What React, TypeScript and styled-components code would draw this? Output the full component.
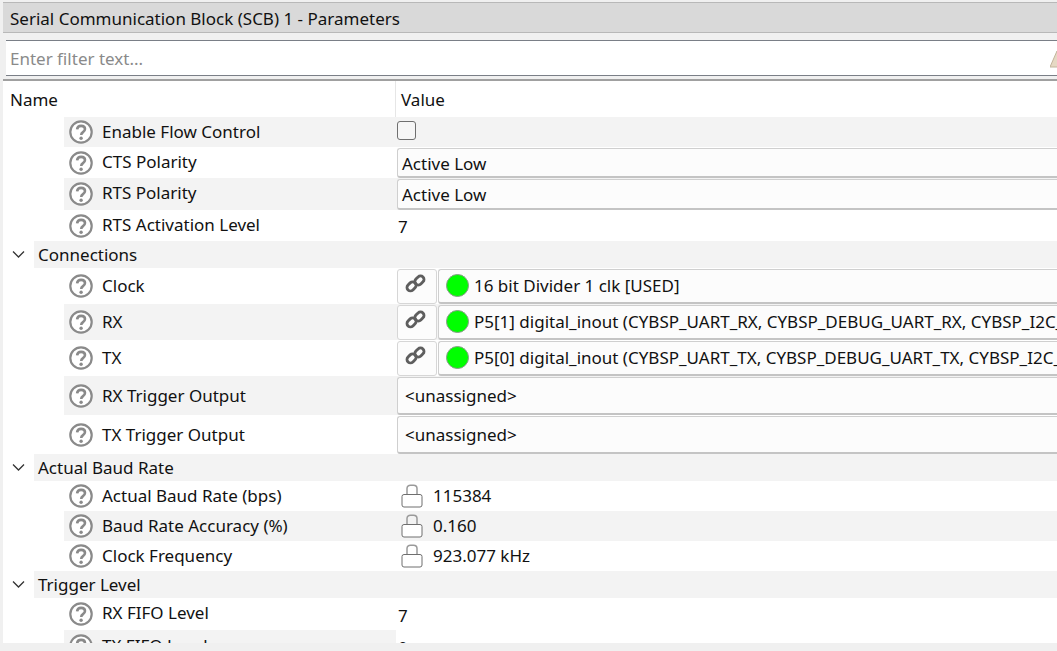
import React from "react";
import styled, { createGlobalStyle } from "styled-components";

const Global = createGlobalStyle`
  html, body { margin: 0; padding: 0; background: #f0f0f0; overflow: hidden; }
  * { box-sizing: border-box; }
`;

const Page = styled.div`
  width: 1057px; height: 651px; background: #f0f0f0; overflow: hidden;
  padding-top: 2px; padding-left: 3px;
  font-family: "Noto Sans", "Open Sans", sans-serif; font-size: 17px; color: #111;
`;
const TitleBar = styled.div`
  height: 31px; background: #d9d9d9; border-top: 1px solid #b8b8b8; border-bottom: 1px solid #b8b8b8;
  display: flex; align-items: center; padding: 2px 0 0 7px; white-space: nowrap;
`;
const FilterBar = styled.div`
  margin-top: 7px; margin-left: 3px; height: 36px; background: #fff;
  border-top: 1px solid #7a7f87; border-bottom: 1px solid #7a7f87;
  display: flex; align-items: center; justify-content: space-between; padding-left: 4px; color: #8a8a8a; overflow: hidden;
`;
const Tree = styled.div`
  margin-top: 3px; height: 564px; background: #fff; border-top: 2px solid #a0a0a0; overflow: hidden;
`;
const Header = styled.div`
  height: 36px; display: flex; align-items: center; white-space: nowrap;
`;
const HeaderName = styled.div`width: 392px; padding-left: 7px;`;
const HeaderValue = styled.div`
  flex: 1; height: 100%; border-left: 1px solid #e6e6e6; padding-left: 5px; display: flex; align-items: center;
`;
const Row = styled.div<{ $h: number }>`
  height: ${p => p.$h}px; display: flex; align-items: stretch; white-space: nowrap;
`;
const Name = styled.div<{ $alt: boolean }>`
  margin-left: 61px; width: 332px; display: flex; align-items: center; gap: 9px; padding-left: 5px;
  background: ${p => (p.$alt ? "#f3f3f3" : "#fff")};
`;
const NameText = styled.span<{ $lift: number }>`position: relative; top: ${p => -p.$lift}px;`;
const Value = styled.div<{ $alt: boolean }>`
  flex: 1; min-width: 0; display: flex; align-items: center; padding-left: 1px; overflow: hidden;
  background: ${p => (p.$alt ? "#f3f3f3" : "#fff")};
`;
const GroupRow = styled.div`
  height: 27px; display: flex; align-items: center; white-space: nowrap;
`;
const Chevron = styled.svg`width: 31px; height: 10px; flex: none; padding-left: 9px;`;
const GroupLabel = styled.div`
  flex: 1; height: 100%; background: #f3f3f3; display: flex; align-items: center; padding-left: 4px;
`;
const Field = styled.div<{ $pad?: number; $top?: number }>`
  flex: 1; height: calc(100% - 1px); background: #fcfcfc; border: 1px solid #cfcfcf; border-bottom: 2px solid #c4c4c4;
  border-right: none; border-radius: 3px 0 0 3px; display: flex; align-items: center;
  padding: ${p => p.$top ?? 0}px 0 0 ${p => p.$pad ?? 4}px; overflow: hidden;
`;
const LinkButton = styled.div`
  width: 40px; flex: none; height: calc(100% - 1px); background: #fcfcfc; border: 1px solid #d6d6d6; border-radius: 3px;
  display: flex; align-items: center; justify-content: center; margin-right: 1px;
`;
const Dot = styled.span`
  width: 23px; height: 23px; flex: none; border-radius: 50%; background: #00ff00; border: 1px solid #8a9a8a; margin: 0 5px 0 4px;
`;
const Check = styled.span`
  width: 19px; height: 19px; border: 1px solid #6f6f6f; border-radius: 3px; background: #f6f6f6; margin: 0 0 3px 0;
`;
const Plain = styled.span`padding: 2px 0 0 1px;`;
const Locked = styled.span`display: flex; align-items: center; gap: 11px; padding-left: 4px;`;
const LockedText = styled.span`position: relative; top: -1px; left: -1px;`;
const HelpSvg = styled.svg`flex: none;`;
const LockSvg = styled.svg`flex: none;`;
const LinkSvg = styled.svg`margin: 0 3px 6px 0;`;
const Warn = styled.svg`width: 20px; height: 20px; flex: none; margin-right: -13px; margin-top: 2px;`;

const Help = () => (
  <HelpSvg width="24" height="24" viewBox="0 0 24 24">
    <circle cx="12" cy="12" r="10.7" fill="#fff" stroke="#8a8a8a" strokeWidth="2.2" />
    <path d="M8.1 9.4c.2-2.2 1.8-3.5 4-3.5 2.3 0 3.9 1.3 3.9 3.2 0 1.4-.8 2.2-2 3-1.1.8-1.8 1.4-1.8 2.8" fill="none" stroke="#8a8a8a" strokeWidth="2.6" />
    <circle cx="12.1" cy="18.3" r="1.7" fill="#8a8a8a" />
  </HelpSvg>
);
const Lock = () => (
  <LockSvg width="22" height="24" viewBox="0 0 22 24">
    <path d="M6 11V4.5C6 2.5 7.5 1.2 9.5 1.2h3C14.5 1.2 16 2.5 16 4.5V11" fill="none" stroke="#9a9a9a" strokeWidth="1.5" />
    <rect x="1" y="10.5" width="20" height="12.5" rx="2" fill="#fff" stroke="#6f6f6f" />
  </LockSvg>
);
const LinkIcon = () => (
  <LinkSvg width="21" height="21" viewBox="0 0 20 20">
    <g fill="none" stroke="#5e5e5e" strokeWidth="2.7">
      <rect x="1.5" y="9.5" width="9.5" height="6.6" rx="3.3" transform="rotate(-45 6.2 12.8)" />
      <rect x="9" y="3.8" width="9.5" height="6.6" rx="3.3" transform="rotate(-45 13.8 7.1)" />
    </g>
  </LinkSvg>
);
const Chev = () => (
  <Chevron viewBox="0 0 22 10">
    <path d="M1 1.5 6.5 7 12 1.5" fill="none" stroke="#333" strokeWidth="1.3" />
  </Chevron>
);

type Item = { name: string; h: number; alt: boolean; valueAlt?: boolean; lift?: number; value: React.ReactNode };
const Param = ({ name, h, alt, valueAlt, lift = 1, value }: Item) => (
  <Row $h={h}>
    <Name $alt={alt}><Help /><NameText $lift={lift}>{name}</NameText></Name>
    <Value $alt={valueAlt ?? alt}>{value}</Value>
  </Row>
);
const Link = ({ text }: { text: string }) => (
  <>
    <LinkButton><LinkIcon /></LinkButton>
    <Field $pad={3}><Dot />{text}</Field>
  </>
);
const Lk = ({ text }: { text: string }) => (
  <Locked><Lock /><LockedText>{text}</LockedText></Locked>
);

export default function App() {
  return (
    <Page>
      <Global />
      <TitleBar>Serial Communication Block (SCB) 1 - Parameters</TitleBar>
      <FilterBar>
        Enter filter text...
        <Warn viewBox="0 0 20 20"><path d="M0 18 7 2l7 16z" fill="#e6d9c4" stroke="#c2b49c" /></Warn>
      </FilterBar>
      <Tree>
        <Header><HeaderName>Name</HeaderName><HeaderValue>Value</HeaderValue></Header>
        <Param name="Enable Flow Control" h={30} alt value={<Check />} />
        <Param name="CTS Polarity" h={31} alt={false} value={<Field $top={2}>Active Low</Field>} />
        <Param name="RTS Polarity" h={32} alt lift={2} value={<Field $top={2}>Active Low</Field>} />
        <Param name="RTS Activation Level" h={31} alt={false} value={<Plain>7</Plain>} />
        <GroupRow><Chev /><GroupLabel>Connections</GroupLabel></GroupRow>
        <Param name="Clock" h={36} alt={false} value={<Link text="16 bit Divider 1 clk [USED]" />} />
        <Param name="RX" h={36} alt value={<Link text="P5[1] digital_inout (CYBSP_UART_RX, CYBSP_DEBUG_UART_RX, CYBSP_I2C_SDA)" />} />
        <Param name="TX" h={36} alt={false} value={<Link text="P5[0] digital_inout (CYBSP_UART_TX, CYBSP_DEBUG_UART_TX, CYBSP_I2C_SCL)" />} />
        <Param name="RX Trigger Output" h={39} alt lift={0} value={<Field $pad={7}>&lt;unassigned&gt;</Field>} />
        <Param name="TX Trigger Output" h={39} alt={false} lift={0} value={<Field $pad={7}>&lt;unassigned&gt;</Field>} />
        <GroupRow><Chev /><GroupLabel>Actual Baud Rate</GroupLabel></GroupRow>
        <Param name="Actual Baud Rate (bps)" h={30} alt={false} value={<Lk text="115384" />} />
        <Param name="Baud Rate Accuracy (%)" h={30} alt value={<Lk text="0.160" />} />
        <Param name="Clock Frequency" h={30} alt={false} value={<Lk text="923.077 kHz" />} />
        <GroupRow><Chev /><GroupLabel>Trigger Level</GroupLabel></GroupRow>
        <Param name="RX FIFO Level" h={32} alt={false} lift={2} value={<Plain>7</Plain>} />
        <Param name="TX FIFO Level" h={32} alt valueAlt={false} value={<Plain>0</Plain>} />
      </Tree>
    </Page>
  );
}
